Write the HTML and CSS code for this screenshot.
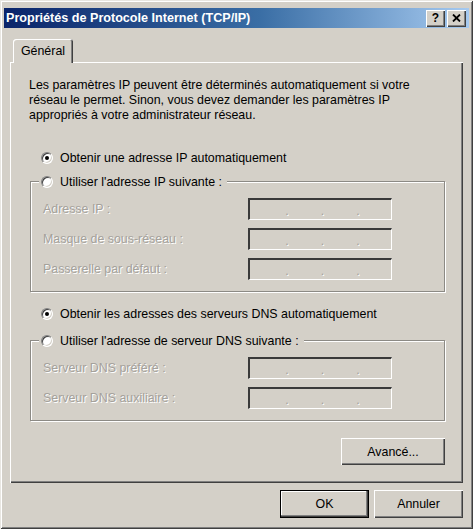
FILE: index.html
```html
<!DOCTYPE html>
<html lang="fr">
<head>
<meta charset="utf-8">
<title>Propriétés de Protocole Internet (TCP/IP)</title>
<link rel="stylesheet" href="styles.css">
</head>
<body>
<div class="window">
  <div class="titlebar">
    <span class="title">Propriétés de Protocole Internet (TCP/IP)</span>
    <div class="caption-buttons">
      <button class="cap-btn help">?</button>
      <button class="cap-btn close"><svg width="9" height="8" viewBox="0 0 9 8"><path d="M1 0.5 L8 7.5 M8 0.5 L1 7.5" stroke="#000" stroke-width="1.8" fill="none"/></svg></button>
    </div>
  </div>
  <div class="tabs">
    <div class="tab">Général</div>
  </div>
  <div class="panel">
    <p class="intro">Les paramètres IP peuvent être déterminés automatiquement si votre<br>réseau le permet. Sinon, vous devez demander les paramètres IP<br>appropriés à votre administrateur réseau.</p>

    <div class="radio-row first"><span class="radio checked"></span><span>Obtenir une adresse IP automatiquement</span></div>
    <div class="group group-ip">
      <div class="group-caption"><span class="radio"></span><span>Utiliser l'adresse IP suivante :</span></div>
      <div class="fields">
        <span class="label">Adresse IP :</span><span class="ip"><i>.</i><i>.</i><i>.</i></span>
        <span class="label">Masque de sous-réseau :</span><span class="ip"><i>.</i><i>.</i><i>.</i></span>
        <span class="label">Passerelle par défaut :</span><span class="ip"><i>.</i><i>.</i><i>.</i></span>
      </div>
    </div>

    <div class="radio-row second"><span class="radio checked"></span><span>Obtenir les adresses des serveurs DNS automatiquement</span></div>
    <div class="group group-dns">
      <div class="group-caption"><span class="radio"></span><span>Utiliser l'adresse de serveur DNS suivante :</span></div>
      <div class="fields">
        <span class="label">Serveur DNS préféré :</span><span class="ip"><i>.</i><i>.</i><i>.</i></span>
        <span class="label">Serveur DNS auxiliaire :</span><span class="ip"><i>.</i><i>.</i><i>.</i></span>
      </div>
    </div>

    <div class="advanced-row"><button class="btn advanced">Avancé...</button></div>
  </div>
  <div class="footer">
    <button class="btn dialog default">OK</button>
    <button class="btn dialog">Annuler</button>
  </div>
</div>
</body>
</html>
```
FILE: styles.css
```css
* { box-sizing: border-box; }
html, body { margin: 0; padding: 0; }
body {
  width: 473px;
  height: 529px;
  overflow: hidden;
  background: #d4d0c8;
  font-family: "Liberation Sans", Arial, sans-serif;
  font-size: 12.4px;
  color: #000;
}
.window {
  width: 473px;
  height: 529px;
  padding: 8px 4px 4px;
  background: #d4d0c8;
  box-shadow: inset 1px 1px 0 #e8e6e1, inset -1px -1px 0 #404040, inset 2px 2px 0 #fff, inset -2px -2px 0 #808080;
  display: flex;
  flex-direction: column;
}
.titlebar {
  height: 20px;
  flex: none;
  display: flex;
  align-items: center;
  justify-content: space-between;
  padding: 0 3px 0 2px;
  background: linear-gradient(to right, #0a246a 0%, #3a6ea5 55%, #a6caf0 100%);
}
.title {
  color: #fff;
  font-weight: bold;
  font-size: 12.6px;
  white-space: nowrap;
}
.caption-buttons { display: flex; gap: 2px; }
.cap-btn {
  width: 19px;
  height: 17px;
  padding: 0;
  border: 0;
  background: #d4d0c8;
  box-shadow: inset 1px 1px 0 #fff, inset -1px -1px 0 #404040, inset -2px -2px 0 #808080;
  display: flex;
  align-items: center;
  justify-content: center;
  font-family: "Liberation Sans", Arial, sans-serif;
  font-weight: bold;
  font-size: 12px;
  color: #000;
}
.tabs {
  display: flex;
  margin-top: 11px;
  padding-left: 9px;
  height: 23px;
  flex: none;
}
.tab {
  position: relative;
  z-index: 1;
  width: 60px;
  height: 24px;
  margin-bottom: -1px;
  background: #d4d0c8;
  border-radius: 3px 3px 0 0;
  box-shadow: inset 1px 1px 0 #fff, inset -1px 0 0 #404040, inset -2px 0 0 #808080;
  display: flex;
  align-items: center;
  justify-content: center;
  padding-bottom: 1px;
}
.panel {
  flex: none;
  margin: 0 6px;
  height: 421px;
  padding-top: 16px;
  box-shadow: inset 1px 1px 0 #fff, inset -1px -1px 0 #404040, inset -2px -2px 0 #808080;
}
.intro {
  margin: 0 0 0 19px;
  line-height: 15px;
}
.radio-row {
  display: flex;
  align-items: center;
  gap: 7px;
  height: 15px;
  margin-left: 31px;
}
.radio-row.first { margin-top: 27px; }
.radio-row.second { margin-top: 14px; }
.radio {
  position: relative;
  flex: none;
  width: 12px;
  height: 12px;
  border-radius: 50%;
  background: #fff;
  border: 1px solid;
  border-color: #808080 #fff #fff #808080;
  box-shadow: inset 1px 1px 0 #404040, inset -1px -1px 0 #d4d0c8;
}
.radio.checked::after {
  content: "";
  position: absolute;
  left: 3px;
  top: 3px;
  width: 4px;
  height: 4px;
  border-radius: 50%;
  background: #000;
}
.group {
  margin-left: 20px;
  width: 415px;
  border: 1px solid #8c8a85;
  box-shadow: 1px 1px 0 #fff, inset 1px 1px 0 #fff;
  padding-bottom: 11px;
}
.group-ip { margin-top: 16px; }
.group-dns { margin-top: 19px; }
.group-caption {
  display: flex;
  align-items: center;
  gap: 7px;
  width: max-content;
  height: 15px;
  margin: -8px 0 0 8px;
  padding: 0 5px 0 2px;
  background: #d4d0c8;
}
.fields {
  display: grid;
  grid-template-columns: 205px 144px;
  grid-auto-rows: 22px;
  row-gap: 8px;
  align-items: center;
  padding: 9px 0 0 12px;
}
.label {
  color: #a4a19b;
  text-shadow: 1px 1px 0 #fff;
  white-space: nowrap;
}
.ip {
  height: 22px;
  display: flex;
  justify-content: center;
  align-items: center;
  gap: 32px;
  padding-left: 4px;
  border-style: solid;
  border-width: 2px 1px 1px 2px;
  border-color: #3a3a3a #fff #fff #3a3a3a;
  box-shadow: inset -1px -1px 0 #d4d0c8;
  color: #a4a19b;
}
.ip i {
  font-style: normal;
  line-height: 18px;
  padding-top: 2px;
  text-shadow: 1px 1px 0 #fff;
}
.advanced-row {
  display: flex;
  justify-content: flex-end;
  padding-right: 18px;
  margin-top: 17px;
}
.btn {
  padding: 0;
  border: 0;
  background: #d4d0c8;
  font-family: "Liberation Sans", Arial, sans-serif;
  font-size: 12.4px;
  color: #000;
  box-shadow: inset 1px 1px 0 #fff, inset -1px -1px 0 #404040, inset -2px -2px 0 #808080;
}
.btn.advanced { width: 104px; height: 27px; }
.footer {
  display: flex;
  justify-content: flex-end;
  gap: 5px;
  margin-top: 7px;
  padding-right: 6px;
}
.btn.dialog { width: 89px; height: 28px; }
.btn.default {
  box-shadow: inset 0 0 0 1px #000, inset -2px -2px 0 #404040, inset -3px -3px 0 #808080, inset 2px 2px 0 #fff;
}
```
